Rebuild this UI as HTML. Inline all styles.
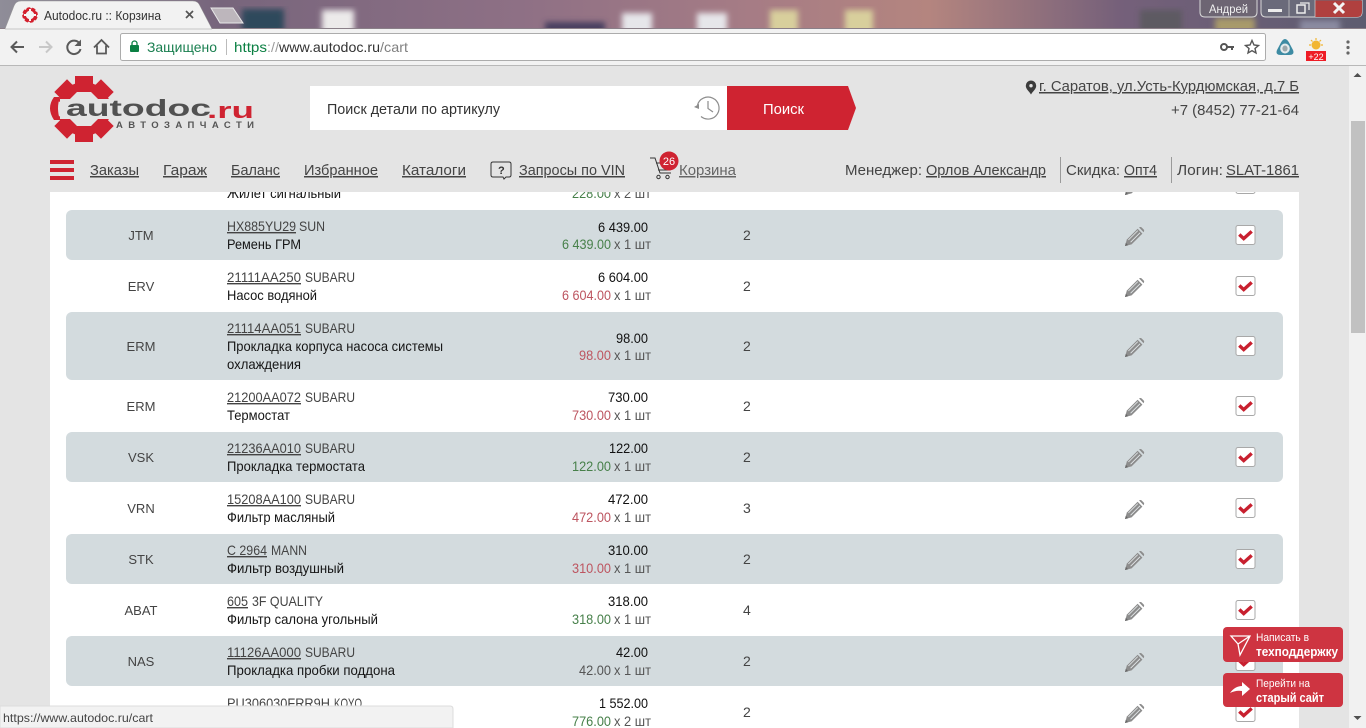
<!DOCTYPE html>
<html lang="ru">
<head>
<meta charset="utf-8">
<title>Autodoc.ru :: Корзина</title>
<style>
html,body{margin:0;padding:0;width:1366px;height:728px;overflow:hidden;background:#e4e4e4}
svg{display:block;position:absolute;left:0;top:0}
text{font-family:"Liberation Sans",sans-serif;font-size:14px;fill:#444;white-space:pre}
.u{text-decoration:underline}
.n{fill:#151515}
.p{fill:#444}
.m{fill:#111}
.gr{fill:#47804a}
.rd{fill:#bd5560}
.x{fill:#555}
.b{fill:#444;text-anchor:middle;font-size:13px}
.h{font-size:15px;fill:#444}
</style>
</head>
<body>
<svg width="1366" height="728" viewBox="0 0 1366 728" xmlns="http://www.w3.org/2000/svg">
<defs>
<linearGradient id="wp" x1="0" x2="1" y1="0" y2="0">
<stop offset="0" stop-color="#8f8d98"/><stop offset=".16" stop-color="#77657c"/><stop offset=".38" stop-color="#8e7085"/><stop offset=".55" stop-color="#a67c85"/><stop offset=".68" stop-color="#b4857f"/><stop offset=".82" stop-color="#75607a"/><stop offset="1" stop-color="#5d5c70"/>
</linearGradient>
<filter id="bl"><feGaussianBlur stdDeviation="3"/></filter>
<g id="pen">
<path d="M-9 9 L-7.2 2.6 L3.6 -8.2 L8.4 -3.4 L-2.4 7.4 Z" fill="#8c8c8c"/>
<path d="M5 -9.6 L6.2 -10 Q7 -10.2 7.8 -9.4 L9.8 -7.4 Q10.4 -6.6 10 -5.8 L9.6 -4.8 Z" fill="#8c8c8c"/>
<path d="M-5.6 3 L3.8 -6.4 M-3.4 5.2 L6 -4.2" stroke="#e8ecee" stroke-width=".8" fill="none"/>
<path d="M-9 9 L-8.2 5.8 L-5.8 8.2 Z" fill="#666"/>
</g>
<g id="chk">
<rect x="-9.5" y="-9.5" width="19" height="19" rx="2" fill="#fff" stroke="#a8a8a8"/>
<path d="M-6.2 -.5 L-1.8 3.6 L6.2 -3.6" fill="none" stroke="#c8202f" stroke-width="3.4"/>
</g>
</defs>

<!-- page -->
<rect width="1366" height="728" fill="#e4e4e4"/>
<rect x="50" y="180" width="1249" height="548" fill="#fff"/>

<!-- row: partial -->
<g transform="translate(0,159)">
<text x="227" y="39" class="n" textLength="114" lengthAdjust="spacingAndGlyphs">Жилет сигнальный</text>
<text x="572" y="39" class="gr" textLength="39" lengthAdjust="spacingAndGlyphs">228.00</text><text x="614" y="39" class="x" textLength="37" lengthAdjust="spacingAndGlyphs">x 2 шт</text>
<use href="#pen" x="1134" y="27"/><use href="#chk" x="1245.5" y="25"/>
</g>

<!-- JTM -->
<g transform="translate(0,210)">
<rect x="66" y="0" width="1217" height="50" rx="6" fill="#d3dbde"/>
<text x="141" y="30" class="b">JTM</text>
<text x="227" y="21" class="p u" textLength="69" lengthAdjust="spacingAndGlyphs">HX885YU29</text><text x="299" y="21" class="p" textLength="26" lengthAdjust="spacingAndGlyphs">SUN</text>
<text x="227" y="39" class="n" textLength="74" lengthAdjust="spacingAndGlyphs">Ремень ГРМ</text>
<text x="598" y="22" class="m" textLength="50" lengthAdjust="spacingAndGlyphs">6 439.00</text>
<text x="562" y="39" class="gr" textLength="49" lengthAdjust="spacingAndGlyphs">6 439.00</text><text x="614" y="39" class="x" textLength="37" lengthAdjust="spacingAndGlyphs">x 1 шт</text>
<text x="743" y="30">2</text>
<use href="#pen" x="1134" y="27"/><use href="#chk" x="1245.5" y="25"/>
</g>

<!-- ERV -->
<g transform="translate(0,261)">
<text x="141" y="30" class="b">ERV</text>
<text x="227" y="21" class="p u" textLength="74" lengthAdjust="spacingAndGlyphs">21111AA250</text><text x="305" y="21" class="p" textLength="50" lengthAdjust="spacingAndGlyphs">SUBARU</text>
<text x="227" y="39" class="n" textLength="90" lengthAdjust="spacingAndGlyphs">Насос водяной</text>
<text x="598" y="21" class="m" textLength="50" lengthAdjust="spacingAndGlyphs">6 604.00</text>
<text x="562" y="39" class="rd" textLength="49" lengthAdjust="spacingAndGlyphs">6 604.00</text><text x="614" y="39" class="x" textLength="37" lengthAdjust="spacingAndGlyphs">x 1 шт</text>
<text x="743" y="30">2</text>
<use href="#pen" x="1134" y="27"/><use href="#chk" x="1245.5" y="25"/>
</g>

<!-- ERM tall -->
<g transform="translate(0,312)">
<rect x="66" y="0" width="1217" height="68" rx="6" fill="#d3dbde"/>
<text x="141" y="39" class="b">ERM</text>
<text x="227" y="21" class="p u" textLength="74" lengthAdjust="spacingAndGlyphs">21114AA051</text><text x="305" y="21" class="p" textLength="50" lengthAdjust="spacingAndGlyphs">SUBARU</text>
<text x="227" y="39" class="n" textLength="216" lengthAdjust="spacingAndGlyphs">Прокладка корпуса насоса системы</text>
<text x="227" y="57" class="n" textLength="74" lengthAdjust="spacingAndGlyphs">охлаждения</text>
<text x="616" y="31" class="m" textLength="32" lengthAdjust="spacingAndGlyphs">98.00</text>
<text x="579" y="48" class="rd" textLength="32" lengthAdjust="spacingAndGlyphs">98.00</text><text x="614" y="48" class="x" textLength="37" lengthAdjust="spacingAndGlyphs">x 1 шт</text>
<text x="743" y="39">2</text>
<use href="#pen" x="1134" y="36"/><use href="#chk" x="1245.5" y="34"/>
</g>

<!-- ERM -->
<g transform="translate(0,381)">
<text x="141" y="30" class="b">ERM</text>
<text x="227" y="21" class="p u" textLength="74" lengthAdjust="spacingAndGlyphs">21200AA072</text><text x="305" y="21" class="p" textLength="50" lengthAdjust="spacingAndGlyphs">SUBARU</text>
<text x="227" y="39" class="n" textLength="63" lengthAdjust="spacingAndGlyphs">Термостат</text>
<text x="608" y="21" class="m" textLength="40" lengthAdjust="spacingAndGlyphs">730.00</text>
<text x="572" y="39" class="rd" textLength="39" lengthAdjust="spacingAndGlyphs">730.00</text><text x="614" y="39" class="x" textLength="37" lengthAdjust="spacingAndGlyphs">x 1 шт</text>
<text x="743" y="30">2</text>
<use href="#pen" x="1134" y="27"/><use href="#chk" x="1245.5" y="25"/>
</g>

<!-- VSK -->
<g transform="translate(0,432)">
<rect x="66" y="0" width="1217" height="50" rx="6" fill="#d3dbde"/>
<text x="141" y="30" class="b">VSK</text>
<text x="227" y="21" class="p u" textLength="74" lengthAdjust="spacingAndGlyphs">21236AA010</text><text x="305" y="21" class="p" textLength="50" lengthAdjust="spacingAndGlyphs">SUBARU</text>
<text x="227" y="39" class="n" textLength="138" lengthAdjust="spacingAndGlyphs">Прокладка термостата</text>
<text x="609" y="21" class="m" textLength="39" lengthAdjust="spacingAndGlyphs">122.00</text>
<text x="572" y="39" class="gr" textLength="39" lengthAdjust="spacingAndGlyphs">122.00</text><text x="614" y="39" class="x" textLength="37" lengthAdjust="spacingAndGlyphs">x 1 шт</text>
<text x="743" y="30">2</text>
<use href="#pen" x="1134" y="27"/><use href="#chk" x="1245.5" y="25"/>
</g>

<!-- VRN -->
<g transform="translate(0,483)">
<text x="141" y="30" class="b">VRN</text>
<text x="227" y="21" class="p u" textLength="74" lengthAdjust="spacingAndGlyphs">15208AA100</text><text x="305" y="21" class="p" textLength="50" lengthAdjust="spacingAndGlyphs">SUBARU</text>
<text x="227" y="39" class="n" textLength="108" lengthAdjust="spacingAndGlyphs">Фильтр масляный</text>
<text x="608" y="21" class="m" textLength="40" lengthAdjust="spacingAndGlyphs">472.00</text>
<text x="572" y="39" class="rd" textLength="39" lengthAdjust="spacingAndGlyphs">472.00</text><text x="614" y="39" class="x" textLength="37" lengthAdjust="spacingAndGlyphs">x 1 шт</text>
<text x="743" y="30">3</text>
<use href="#pen" x="1134" y="27"/><use href="#chk" x="1245.5" y="25"/>
</g>

<!-- STK -->
<g transform="translate(0,534)">
<rect x="66" y="0" width="1217" height="50" rx="6" fill="#d3dbde"/>
<text x="141" y="30" class="b">STK</text>
<text x="227" y="21" class="p u" textLength="40" lengthAdjust="spacingAndGlyphs">C 2964</text><text x="271" y="21" class="p" textLength="36" lengthAdjust="spacingAndGlyphs">MANN</text>
<text x="227" y="39" class="n" textLength="117" lengthAdjust="spacingAndGlyphs">Фильтр воздушный</text>
<text x="608" y="21" class="m" textLength="40" lengthAdjust="spacingAndGlyphs">310.00</text>
<text x="572" y="39" class="rd" textLength="39" lengthAdjust="spacingAndGlyphs">310.00</text><text x="614" y="39" class="x" textLength="37" lengthAdjust="spacingAndGlyphs">x 1 шт</text>
<text x="743" y="30">2</text>
<use href="#pen" x="1134" y="27"/><use href="#chk" x="1245.5" y="25"/>
</g>

<!-- ABAT -->
<g transform="translate(0,585)">
<text x="141" y="30" class="b">ABAT</text>
<text x="227" y="21" class="p u" textLength="21" lengthAdjust="spacingAndGlyphs">605</text><text x="252" y="21" class="p" textLength="71" lengthAdjust="spacingAndGlyphs">3F QUALITY</text>
<text x="227" y="39" class="n" textLength="151" lengthAdjust="spacingAndGlyphs">Фильтр салона угольный</text>
<text x="608" y="21" class="m" textLength="40" lengthAdjust="spacingAndGlyphs">318.00</text>
<text x="572" y="39" class="gr" textLength="39" lengthAdjust="spacingAndGlyphs">318.00</text><text x="614" y="39" class="x" textLength="37" lengthAdjust="spacingAndGlyphs">x 1 шт</text>
<text x="743" y="30">4</text>
<use href="#pen" x="1134" y="27"/><use href="#chk" x="1245.5" y="25"/>
</g>

<!-- NAS -->
<g transform="translate(0,636)">
<rect x="66" y="0" width="1217" height="50" rx="6" fill="#d3dbde"/>
<text x="141" y="30" class="b">NAS</text>
<text x="227" y="21" class="p u" textLength="74" lengthAdjust="spacingAndGlyphs">11126AA000</text><text x="305" y="21" class="p" textLength="50" lengthAdjust="spacingAndGlyphs">SUBARU</text>
<text x="227" y="39" class="n" textLength="168" lengthAdjust="spacingAndGlyphs">Прокладка пробки поддона</text>
<text x="616" y="21" class="m" textLength="32" lengthAdjust="spacingAndGlyphs">42.00</text>
<text x="579" y="39" class="x" textLength="32" lengthAdjust="spacingAndGlyphs">42.00</text><text x="614" y="39" class="x" textLength="37" lengthAdjust="spacingAndGlyphs">x 1 шт</text>
<text x="743" y="30">2</text>
<use href="#pen" x="1134" y="27"/><use href="#chk" x="1245.5" y="25"/>
</g>

<!-- last -->
<g transform="translate(0,687)">
<text x="227" y="21" class="p" textLength="103" lengthAdjust="spacingAndGlyphs">PU306030FRR9H</text><text x="334" y="21" class="p" textLength="28" lengthAdjust="spacingAndGlyphs">KOYO</text>
<text x="599" y="21" class="m" textLength="49" lengthAdjust="spacingAndGlyphs">1 552.00</text>
<text x="572" y="39" class="gr" textLength="39" lengthAdjust="spacingAndGlyphs">776.00</text><text x="614" y="39" class="x" textLength="37" lengthAdjust="spacingAndGlyphs">x 2 шт</text>
<text x="743" y="30">2</text>
<use href="#pen" x="1134" y="27"/><use href="#chk" x="1245.5" y="25"/>
</g>

<!-- header -->
<rect x="0" y="66" width="1349" height="126" fill="#e4e4e4"/>
<rect x="0" y="192" width="50" height="536" fill="#e4e4e4"/>
<rect x="1299" y="192" width="50" height="536" fill="#e4e4e4"/>

<!-- logo -->
<g fill="#cf2331">
<g id="t">
<path d="M75 76 H93 V84 L97 85 L93 92 H75 L71 85 L75 84 Z"/>
</g>
<use href="#t" transform="rotate(45 84 109)"/>
<use href="#t" transform="rotate(135 84 109)"/>
<use href="#t" transform="rotate(180 84 109)"/>
<use href="#t" transform="rotate(225 84 109)"/>
<use href="#t" transform="rotate(315 84 109)"/>
<path d="M54 97 L60 97 Q56 108 60 120 L54 120 Q46 108 54 97 Z"/>
</g>
<rect x="60" y="99" width="155" height="20" fill="#e4e4e4"/>
<text x="66" y="116" textLength="145" lengthAdjust="spacingAndGlyphs" style="font-size:23px;font-weight:bold;fill:#515151">autodoc</text>
<text x="207" y="118" textLength="47" lengthAdjust="spacingAndGlyphs" style="font-size:22px;font-weight:bold;fill:#cf2331">.ru</text>
<text x="116" y="128" textLength="138" style="font-size:9.5px;font-weight:bold;fill:#555">АВТОЗАПЧАСТИ</text>

<!-- search -->
<rect x="310" y="86" width="417" height="44" fill="#fff"/>
<text x="327" y="114" textLength="173" lengthAdjust="spacingAndGlyphs" class="h" style="fill:#333">Поиск детали по артикулу</text>
<g fill="none" stroke="#8d8d8d" stroke-width="1.2">
<path d="M697.5 105 A11 11 0 1 1 701 116.5"/>
<path d="M708 101 V108.5 L713 112"/>
</g>
<path d="M694 107 L699 104 L699 109 Z" fill="#8d8d8d"/>
<path d="M727 86 H848 L856 108 L848 130 H727 Z" fill="#cf2331"/>
<text x="763" y="114" textLength="41" lengthAdjust="spacingAndGlyphs" class="h" style="fill:#fff">Поиск</text>

<!-- contacts -->
<path d="M1031 80.500 a5.200 5.200 0 0 1 5.200 5.200 c0 3.400 -3.200 5.200 -5.200 8.800 c-2 -3.600 -5.200 -5.400 -5.200 -8.800 a5.200 5.200 0 0 1 5.200 -5.200 Z" fill="#3c3c3c"/>
<circle cx="1031" cy="85.700" r="1.700" fill="#e4e4e4"/>
<text x="1039" y="91" textLength="260" lengthAdjust="spacingAndGlyphs" class="h u">г. Саратов, ул.Усть-Курдюмская, д.7 Б</text>
<text x="1171" y="115" textLength="128" lengthAdjust="spacingAndGlyphs" class="h">+7 (8452) 77-21-64</text>

<!-- nav -->
<g fill="#cf2331"><rect x="50" y="160" width="24" height="4"/><rect x="50" y="168" width="24" height="4"/><rect x="50" y="176" width="24" height="4"/></g>
<text x="90" y="175" textLength="49" lengthAdjust="spacingAndGlyphs" class="h u">Заказы</text>
<text x="163" y="175" textLength="44" lengthAdjust="spacingAndGlyphs" class="h u">Гараж</text>
<text x="231" y="175" textLength="49" lengthAdjust="spacingAndGlyphs" class="h u">Баланс</text>
<text x="304" y="175" textLength="74" lengthAdjust="spacingAndGlyphs" class="h u">Избранное</text>
<text x="402" y="175" textLength="64" lengthAdjust="spacingAndGlyphs" class="h u">Каталоги</text>
<path d="M493 162 H509 Q511 162 511 164 V175 Q511 177 509 177 H506 L504 179 L503 177 H493 Q491 177 491 175 V164 Q491 162 493 162 Z" fill="none" stroke="#333" stroke-width="1"/>
<text x="498" y="174" style="font-size:11px;font-weight:bold;fill:#333">?</text>
<text x="519" y="175" textLength="106" lengthAdjust="spacingAndGlyphs" class="h u">Запросы по VIN</text>
<g fill="none" stroke="#333" stroke-width="1">
<path d="M650 158 H655 L660 173 H671"/><path d="M656 163 H672 L670 170 H658"/>
<circle cx="658.500" cy="177" r="1.700"/><circle cx="667.500" cy="177" r="1.700"/>
</g>
<circle cx="669" cy="161" r="9.500" fill="#cf2331"/>
<text x="669" y="165" text-anchor="middle" style="font-size:11px;fill:#fff">26</text>
<text x="679" y="175" textLength="57" lengthAdjust="spacingAndGlyphs" class="h u" style="fill:#666">Корзина</text>
<text x="845" y="175" textLength="77" lengthAdjust="spacingAndGlyphs" class="h">Менеджер:</text>
<text x="926" y="175" textLength="120" lengthAdjust="spacingAndGlyphs" class="h u">Орлов Александр</text>
<rect x="1060" y="157" width="1" height="26" fill="#9a9a9a"/>
<text x="1066" y="175" textLength="54" lengthAdjust="spacingAndGlyphs" class="h">Скидка:</text>
<text x="1124" y="175" textLength="33" lengthAdjust="spacingAndGlyphs" class="h u">Опт4</text>
<rect x="1171" y="157" width="1" height="26" fill="#9a9a9a"/>
<text x="1177" y="175" textLength="46" lengthAdjust="spacingAndGlyphs" class="h">Логин:</text>
<text x="1226" y="175" textLength="73" lengthAdjust="spacingAndGlyphs" class="h u">SLAT-1861</text>

<!-- scrollbar -->
<rect x="1349" y="66" width="17" height="662" fill="#f1f1f1"/>
<rect x="1351" y="121" width="14" height="212" fill="#c1c1c1"/>
<path d="M1353.500 77 L1357.500 73 L1361.500 77 Z" fill="#505050"/>
<path d="M1353.500 716 L1357.500 720 L1361.500 716 Z" fill="#505050"/>

<!-- float buttons -->
<rect x="1223" y="627" width="120" height="35" rx="4" fill="#ce3441"/>
<path d="M1231 636 L1250 636 L1240 655 L1238 644 Z M1238 644 L1250 636" fill="none" stroke="#fff" stroke-width="1.300"/>
<text x="1256" y="641" textLength="53" lengthAdjust="spacingAndGlyphs" style="font-size:11px;fill:#fff">Написать в</text>
<text x="1256" y="656" textLength="82" lengthAdjust="spacingAndGlyphs" style="font-size:13px;font-weight:bold;fill:#fff">техподдержку</text>
<rect x="1223" y="673" width="120" height="34" rx="4" fill="#ce3441"/>
<path d="M1230 693 Q1235 686 1242 686 L1242 682 L1250 689 L1242 696 L1242 691 Q1236 690 1230 693 Z" fill="#fff"/>
<text x="1256" y="687" textLength="54" lengthAdjust="spacingAndGlyphs" style="font-size:11px;fill:#fff">Перейти на</text>
<text x="1256" y="702" textLength="68" lengthAdjust="spacingAndGlyphs" style="font-size:13px;font-weight:bold;fill:#fff">старый сайт</text>

<!-- status bar -->
<path d="M0 706 H450 Q453 706 453 709 V728 H0 Z" fill="#f2f2f2" stroke="#dcdcdc" stroke-width="1"/>
<text x="3" y="722" textLength="150" lengthAdjust="spacingAndGlyphs" style="font-size:12px;fill:#444">https://www.autodoc.ru/cart</text>

<!-- wallpaper/title strip -->
<rect x="0" y="0" width="1366" height="30" fill="url(#wp)"/>
<g filter="url(#bl)">
<rect x="242" y="9" width="42" height="24" fill="#2f4a5c"/>
<rect x="322" y="10" width="32" height="24" fill="#eceaea"/>
<rect x="545" y="22" width="60" height="12" fill="#4a4060"/>
<rect x="622" y="13" width="30" height="22" fill="#e6e6ea"/>
<rect x="697" y="13" width="30" height="22" fill="#e6e6ea"/>
<rect x="770" y="10" width="28" height="24" fill="#d8cf9c"/>
<rect x="845" y="10" width="28" height="24" fill="#d8cf9c"/>
<rect x="1140" y="10" width="42" height="24" fill="#5d5a62"/>
<rect x="1215" y="18" width="40" height="16" fill="#a89a6a"/>
<rect x="1300" y="20" width="40" height="14" fill="#8a8aa0"/>
</g>
<!-- window controls -->
<path d="M1200 0 V12 Q1200 17 1205 17 H1252 Q1257 17 1257 12 V0" fill="#6d6573" stroke="#d8d8d8" stroke-width="1"/>
<text x="1209" y="13" textLength="39" lengthAdjust="spacingAndGlyphs" style="font-size:11.500px;fill:#f0f0f0">Андрей</text>
<path d="M1261 0 V12 Q1261 17 1266 17 H1357 Q1362 17 1362 12 V0" fill="#6a6a7a" stroke="#d8d8d8" stroke-width="1"/>
<path d="M1315 .5 H1362 V12 Q1362 17 1357 17 H1315 Z" fill="#b0403f"/>
<path d="M1289 0 V17 M1315 0 V17" stroke="#d0d0d0" stroke-width=".7"/>
<rect x="1268" y="9" width="14" height="3" fill="#ececec"/>
<rect x="1297" y="5" width="8" height="8" fill="none" stroke="#ececec" stroke-width="1.500"/>
<path d="M1300 3 H1309 V10" fill="none" stroke="#ececec" stroke-width="1.200"/>
<path d="M1334 3 L1344 13 M1344 3 L1334 13" stroke="#f4f4f4" stroke-width="3"/>

<!-- toolbar -->
<rect x="0" y="29" width="1366" height="36" fill="#f2f2f2"/>
<rect x="0" y="65" width="1366" height="1" fill="#b8b8b8"/>
<rect x="0" y="28" width="1366" height="1" fill="#8a7f88"/>
<path d="M5 29 L14 6 Q16 1 21 1 H193 Q198 1 200 6 L212 29 Z" fill="#f2f2f2" stroke="#9a9a9a" stroke-width=".5"/>
<path d="M211 8 H233 L243 23 H220 Z" fill="#bdb6bc" stroke="#e8e8e8" stroke-width="1"/>
<!-- favicon -->
<circle cx="30" cy="15" r="6" fill="none" stroke="#d3202e" stroke-width="3.600"/>
<circle cx="30" cy="15" r="7.500" fill="none" stroke="#f2f2f2" stroke-width="1.200" stroke-dasharray="2 3.900"/>
<path d="M30 9 V21 M24 15 H36" stroke="#f6f6f6" stroke-width="2"/>
<text x="44" y="20" textLength="117" lengthAdjust="spacingAndGlyphs" style="font-size:13px;fill:#333">Autodoc.ru :: Корзина</text>
<path d="M186 11 L193 18 M193 11 L186 18" stroke="#555" stroke-width="1.700"/>

<!-- nav buttons -->
<path d="M24 47 H12 M17 41.500 L11.500 47 L17 52.500" fill="none" stroke="#5a5a5a" stroke-width="2"/>
<path d="M39 47 H51 M46 41.500 L51.500 47 L46 52.500" fill="none" stroke="#c8c8c8" stroke-width="2"/>
<path d="M79.500 43.500 A6.700 6.700 0 1 0 80.500 49" fill="none" stroke="#5a5a5a" stroke-width="2"/>
<path d="M81 39.500 V46 H74.500 Z" fill="#5a5a5a"/>
<path d="M94 47.500 L101.500 40 L109 47.500 M97 45.500 V53.500 H106 V45.500" fill="none" stroke="#5a5a5a" stroke-width="1.800"/>

<!-- omnibox -->
<rect x="120.500" y="33.500" width="1145" height="27" rx="2" fill="#fff" stroke="#acacac"/>
<rect x="130" y="45" width="9" height="7" rx="1" fill="#0b8043"/>
<path d="M132 45 V43.500 A2.500 2.500 0 0 1 137 43.500 V45" fill="none" stroke="#0b8043" stroke-width="1.300"/>
<text x="147" y="52" textLength="70" lengthAdjust="spacingAndGlyphs" style="fill:#1a7f50">Защищено</text>
<rect x="226" y="39" width="1" height="16" fill="#bbb"/>
<text x="234" y="52" textLength="33" lengthAdjust="spacingAndGlyphs" style="fill:#0b8043">https</text>
<text x="267" y="52" textLength="12" lengthAdjust="spacing" style="fill:#999">://</text>
<text x="279" y="52" textLength="101" lengthAdjust="spacingAndGlyphs" style="fill:#333">www.autodoc.ru</text>
<text x="380" y="52" textLength="28" lengthAdjust="spacingAndGlyphs" style="fill:#808080">/cart</text>
<circle cx="1224" cy="47" r="3" fill="none" stroke="#555" stroke-width="2"/>
<path d="M1227 47 H1234 M1232 47 V50" stroke="#555" stroke-width="2" fill="none"/>
<path d="M1252 40.500 L1254 45 L1258.500 45.500 L1255 48.500 L1256 53 L1252 50.700 L1248 53 L1249 48.500 L1245.500 45.500 L1250 45 Z" fill="none" stroke="#555" stroke-width="1.400"/>

<!-- extensions -->
<path d="M1285 39 Q1287 39 1289 42.500 L1293 50 Q1295 55 1289 55 H1281 Q1275 55 1277 50 L1281 42.500 Q1283 39 1285 39 Z" fill="#3d8ba3"/>
<ellipse cx="1285" cy="48.500" rx="4.800" ry="5" fill="#e3eaec"/>
<ellipse cx="1285" cy="48.500" rx="2.600" ry="3" fill="#9aa7ab"/>
<circle cx="1316" cy="45" r="4.500" fill="#f2b632"/>
<path d="M1316 38 V40 M1309 45 H1311 M1321 45 H1323 M1311 40 L1312.500 41.500 M1321 40 L1319.500 41.500" stroke="#f2b632" stroke-width="1.200"/>
<rect x="1306" y="51" width="20" height="10" fill="#ee1c25"/>
<text x="1316" y="60" text-anchor="middle" style="font-size:9px;fill:#fff">+22</text>
<circle cx="1348" cy="42" r="1.600" fill="#666"/><circle cx="1348" cy="47.500" r="1.600" fill="#666"/><circle cx="1348" cy="53" r="1.600" fill="#666"/>
</svg>
</body>
</html>
